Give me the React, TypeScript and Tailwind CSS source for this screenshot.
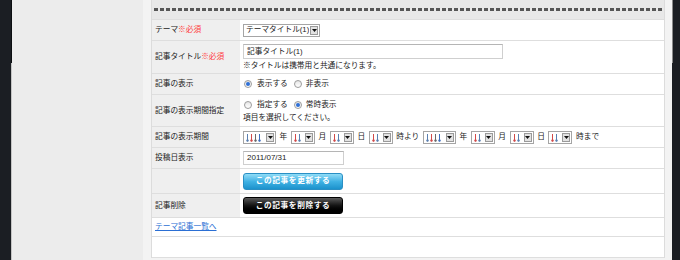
import React from "react";

const Arrow = () => (
  <svg width="5" height="3" viewBox="0 0 5 3">
    <path d="M0 0h5L2.5 3z" fill="#111" />
  </svg>
);

const Select = ({ width, children }: { width: string; children: React.ReactNode }) => (
  <span className={`flex h-[13px] shrink-0 items-stretch border border-[#a5a5a5] bg-white ${width}`}>
    <span className="flex flex-1 items-center overflow-hidden whitespace-nowrap pl-[2px] leading-none">{children}</span>
    <span className="m-[1px] flex w-[8px] items-center justify-center border border-[#9a9a9a] bg-[#e2e2e2]">
      <Arrow />
    </span>
  </span>
);

// the date selects show a row of small coloured down-arrows
const Ticks = ({ colors }: { colors: string[] }) => (
  <span className="flex items-center gap-[1px] pt-[1px]">
    {colors.map((c, i) => (
      <svg key={i} width="3" height="8" viewBox="0 0 3 8">
        <path d="M1.5 0v7" stroke={c} strokeWidth="1" />
        <path d="M0 5.5l1.5 2.5 1.5-2.5" stroke={c} strokeWidth="0.8" fill="none" />
      </svg>
    ))}
  </span>
);

const Radio = ({ checked }: { checked?: boolean }) => (
  <span className="flex h-[8px] w-[8px] shrink-0 items-center justify-center rounded-full border border-[#9c9c9c] bg-gradient-to-b from-[#e6e6e6] to-white">
    {checked && <span className="h-[4px] w-[4px] rounded-full bg-[#2f6fd6]" />}
  </span>
);

const Label = ({ children }: { children?: React.ReactNode }) => (
  <div className="flex w-[88px] shrink-0 items-center whitespace-nowrap bg-[#efefef] pl-[3px]">{children}</div>
);

const Required = () => <span className="text-[#ff3b3b]">※必須</span>;

const yearTicks = ["#5a7fb0", "#d24a4a", "#6a6a6a", "#3f6fc0"];
const twoTicks = ["#d24a4a", "#5a7fb0"];

export default function App() {
  return (
    <div className="flex h-[260px] w-[680px] overflow-hidden bg-[#ececec] font-['Liberation_Sans','Noto_Sans_CJK_JP',sans-serif] text-[7.7px] text-[#1a1a1a]">
      <div className="flex w-[12px] shrink-0 bg-[#1b1e23]">
        <div className="w-[11px]" />
        <div className="flex w-[1px] flex-col">
          <div className="h-[63px] bg-[#0c0e11]" />
          <div className="flex-1 bg-[#c4c4c4]" />
        </div>
      </div>
      <div className="w-[131px] shrink-0" />
      <div className="flex w-[529px] shrink-0 bg-[#f3f3f3] pl-[8px] pr-[7px]">
        <div className="flex h-[258px] flex-1 flex-col border-x border-[#dcdcdc] bg-white">
          {/* header strip */}
          <div className="flex h-[20px] items-center border-b border-[#dedede] bg-[#e8e8e8] px-[2px]">
            <div className="h-[3px] flex-1 bg-[repeating-linear-gradient(90deg,#565656_0px,#565656_4px,transparent_4px,transparent_6px)]" />
          </div>

          <div className="flex h-[21px] border-b border-[#dedede]">
            <Label>
              テーマ<Required />
            </Label>
            <div className="flex flex-1 items-center pl-[3px]">
              <Select width="w-[77px]">テーマタイトル(1)</Select>
            </div>
          </div>

          <div className="flex h-[33px] border-b border-[#dedede]">
            <Label>
              記事タイトル<Required />
            </Label>
            <div className="flex flex-1 flex-col justify-center gap-[3px] pl-[3px]">
              <div className="flex h-[15px] w-[260px] items-center border border-[#cfcfcf] border-t-[#b5b5b5] pl-[3px]">
                記事タイトル(1)
              </div>
              <div className="leading-none">※タイトルは携帯用と共通になります。</div>
            </div>
          </div>

          <div className="flex h-[21px] border-b border-[#dedede]">
            <Label>記事の表示</Label>
            <div className="flex flex-1 items-center pl-[4px]">
              <Radio checked />
              <span className="ml-[5px]">表示する</span>
              <span className="ml-[6px]">
                <Radio />
              </span>
              <span className="ml-[4px]">非表示</span>
            </div>
          </div>

          <div className="flex h-[32px] border-b border-[#dedede]">
            <Label>記事の表示期間指定</Label>
            <div className="flex flex-1 flex-col justify-center gap-[3px] pl-[3px]">
              <div className="flex items-center pl-[1px]">
                <Radio />
                <span className="ml-[5px]">指定する</span>
                <span className="ml-[6px]">
                  <Radio checked />
                </span>
                <span className="ml-[4px]">常時表示</span>
              </div>
              <div className="leading-none">項目を選択してください。</div>
            </div>
          </div>

          <div className="flex h-[21px] border-b border-[#dedede]">
            <Label>記事の表示期間</Label>
            <div className="flex flex-1 items-center gap-[3.6px] pl-[3px]">
              <Select width="w-[33px]"><Ticks colors={yearTicks} /></Select>
              <span>年</span>
              <Select width="w-[24px]"><Ticks colors={twoTicks} /></Select>
              <span>月</span>
              <Select width="w-[24px]"><Ticks colors={twoTicks} /></Select>
              <span>日</span>
              <Select width="w-[24px]"><Ticks colors={twoTicks} /></Select>
              <span>時より</span>
              <Select width="w-[33px]"><Ticks colors={yearTicks} /></Select>
              <span>年</span>
              <Select width="w-[24px]"><Ticks colors={twoTicks} /></Select>
              <span>月</span>
              <Select width="w-[24px]"><Ticks colors={twoTicks} /></Select>
              <span>日</span>
              <Select width="w-[24px]"><Ticks colors={twoTicks} /></Select>
              <span>時まで</span>
            </div>
          </div>

          <div className="flex h-[21px] border-b border-[#dedede]">
            <Label>投稿日表示</Label>
            <div className="flex flex-1 items-center pl-[3px]">
              <div className="flex h-[14px] w-[101px] items-center border border-[#cfcfcf] border-t-[#b5b5b5] pl-[3px] text-[8px]">
                2011/07/31
              </div>
            </div>
          </div>

          <div className="flex h-[25px] border-b border-[#dedede]">
            <Label />
            <div className="flex flex-1 items-center pl-[3px]">
              <button className="flex h-[17px] w-[100px] items-center justify-center rounded-[3px] border border-[#2a8fc4] bg-gradient-to-b from-[#8fdcf7] via-[#3fb2e4] to-[#1a92cc] font-bold tracking-[0.6px] text-white">
                この記事を更新する
              </button>
            </div>
          </div>

          <div className="flex h-[24px] border-b border-[#dedede]">
            <Label>記事削除</Label>
            <div className="flex flex-1 items-center pl-[3px]">
              <button className="flex h-[17px] w-[100px] items-center justify-center rounded-[3px] border border-[#000] bg-gradient-to-b from-[#5a5a5a] via-[#141414] to-[#000] font-bold tracking-[0.6px] text-white">
                この記事を削除する
              </button>
            </div>
          </div>

          <div className="flex h-[19px] items-center border-b border-[#dedede] pl-[3px]">
            <a href="#" className="text-[#2b6fd4] underline">
              テーマ記事一覧へ
            </a>
          </div>

          <div className="h-[21px] border-b border-[#dedede]" />
        </div>
      </div>
      <div className="flex w-[8px] shrink-0 bg-[#1b1e23]">
        <div className="flex w-[1px] flex-col">
          <div className="h-[63px] bg-[#8a8a8a]" />
          <div className="flex-1" />
        </div>
      </div>
    </div>
  );
}
